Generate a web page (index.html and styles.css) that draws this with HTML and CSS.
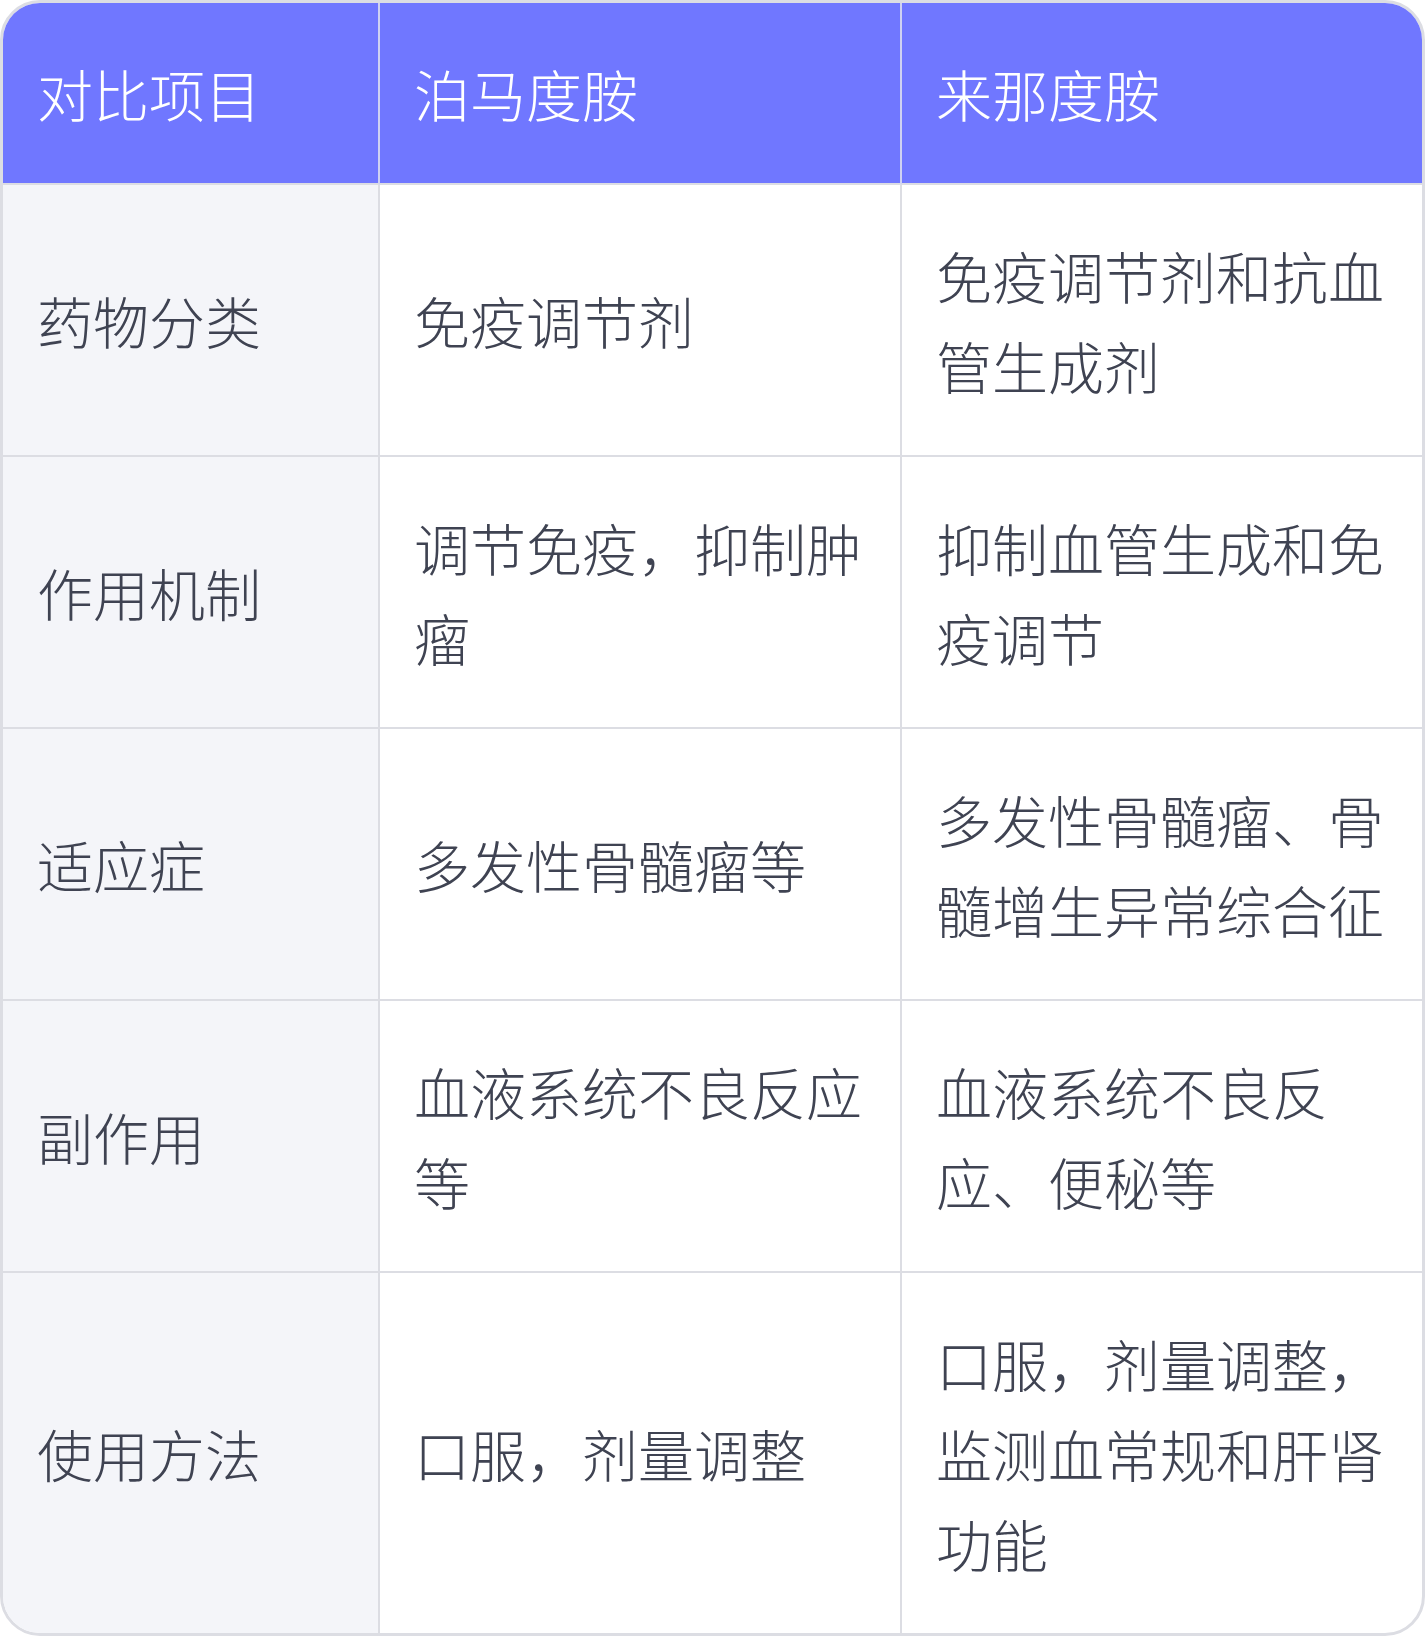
FILE: index.html
```html
<!DOCTYPE html>
<html lang="zh-CN">
<head>
<meta charset="utf-8">
<title>泊马度胺与来那度胺对比</title>
<link rel="stylesheet" href="styles.css">
</head>
<body>
<div class="card">
  <table class="cmp">
    <colgroup>
      <col class="c1">
      <col class="c2">
      <col class="c3">
    </colgroup>
    <thead>
      <tr>
        <th>对比项目</th>
        <th>泊马度胺</th>
        <th>来那度胺</th>
      </tr>
    </thead>
    <tbody>
      <tr>
        <td class="label">药物分类</td>
        <td>免疫调节剂</td>
        <td>免疫调节剂和抗血管生成剂</td>
      </tr>
      <tr>
        <td class="label">作用机制</td>
        <td>调节免疫，抑制肿瘤</td>
        <td>抑制血管生成和免疫调节</td>
      </tr>
      <tr>
        <td class="label">适应症</td>
        <td>多发性骨髓瘤等</td>
        <td>多发性骨髓瘤、骨髓增生异常综合征</td>
      </tr>
      <tr>
        <td class="label">副作用</td>
        <td>血液系统不良反应等</td>
        <td>血液系统不良反应、便秘等</td>
      </tr>
      <tr>
        <td class="label">使用方法</td>
        <td>口服，剂量调整</td>
        <td>口服，剂量调整，监测血常规和肝肾功能</td>
      </tr>
    </tbody>
  </table>
</div>
</body>
</html>
```

FILE: styles.css
```css
html, body {
  margin: 0;
  padding: 0;
  background: #ffffff;
}

.card {
  width: 1425px;
  box-sizing: border-box;
  border: 3px solid #dcdde3;
  border-radius: 40px;
  overflow: hidden;
  background: #ffffff;
}

.cmp {
  width: 1419px;
  border-collapse: separate;
  border-spacing: 0;
  table-layout: fixed;
  font-family: "Noto Sans CJK SC", "Noto Sans", sans-serif;
  font-size: 56px;
  line-height: 90px;
  color: #3f4352;
}

.c1 { width: 377px; }
.c2 { width: 522px; }
.c3 { width: 520px; }

.cmp th,
.cmp td {
  padding: 45px 34px;
  text-align: left;
  vertical-align: middle;
  font-weight: 300;
  border-right: 2px solid #dcdde3;
  border-bottom: 2px solid #dcdde3;
  word-break: break-all;
}

.cmp th:last-child,
.cmp td:last-child {
  border-right: none;
}

.cmp tbody tr:last-child td {
  border-bottom: none;
}

.cmp th {
  background: #7077ff;
  color: #ffffff;
}

.cmp thead th {
  border-right-color: #cfd1f2;
}

.cmp td.label {
  background: #f4f5f9;
}
```
